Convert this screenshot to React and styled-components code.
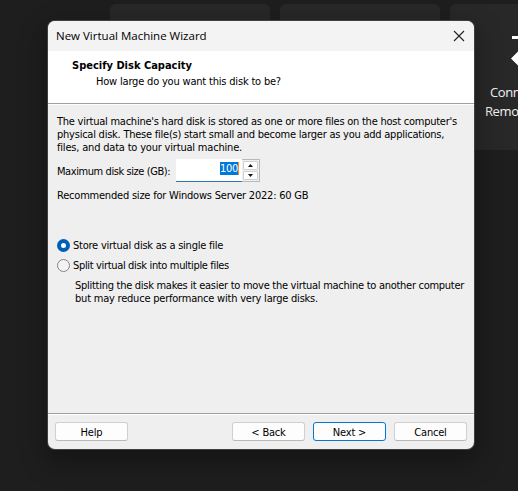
import React, { useState } from "react";
import styled, { createGlobalStyle, css } from "styled-components";

const GlobalStyle = createGlobalStyle`
  *, *::before, *::after { box-sizing: border-box; }
  html, body { margin: 0; background: #1e1e1e; }
  button, input { font: inherit; color: inherit; letter-spacing: inherit; margin: 0; }
`;

const Desktop = styled.main`
  position: relative;
  width: 518px;
  height: 491px;
  overflow: hidden;
  background: #1e1e1e;
`;

const TileRow = styled.div`
  display: flex;
  gap: 10px;
  padding: 4px 0 0 110px;
`;

const Tile = styled.div`
  flex: 0 0 160px;
  height: 146px;
  border-radius: 6px;
  background: #282828;
  color: #f3f3f3;
  font: 13px/19px "Open Sans", "Noto Sans", sans-serif;
`;

const TileContent = styled.div`
  padding: 31px 0 0 34px;
  svg { display: block; margin-left: 26px; }
`;

const TileLabel = styled.div`
  margin-top: 17px;
  padding-left: 6px;
  white-space: nowrap;
  letter-spacing: -0.4px;
`;

const TileLabelSecond = styled(TileLabel)`
  margin-top: 0;
  padding-left: 1px;
`;

const Dialog = styled.section`
  position: absolute;
  left: 48px;
  top: 21px;
  width: 426px;
  height: 428px;
  display: flex;
  flex-direction: column;
  overflow: hidden;
  border-radius: 7px;
  background: #efefef;
  color: #000;
  font: 11px/13px "DejaVu Sans Condensed", "DejaVu Sans", sans-serif;
  box-shadow: 0 0 0 1px #404040, 0 10px 26px 4px rgba(0, 0, 0, 0.3);
`;

const TitleBar = styled.header`
  flex: 0 0 30px;
  display: flex;
  align-items: center;
  justify-content: space-between;
  padding: 0 9px 0 8px;
  background: #f3f3f3;
  font: 11.5px/16px "Open Sans", "Noto Sans", sans-serif;
`;

const CloseButton = styled.button`
  width: 12px;
  height: 12px;
  padding: 0;
  border: 0;
  background: none;
  svg { display: block; }
`;

const Heading = styled.div`
  flex: 0 0 53px;
  padding: 8px 0 0 24px;
  background: #fff;
  border-bottom: 1px solid #a0a0a0;
  box-shadow: 0 1px #fff;
`;

const Text = styled.div`
  white-space: nowrap;
  letter-spacing: ${(p) => p.$tracking || 0}px;
`;

const HeadingTitle = styled(Text)`
  font-weight: bold;
`;

const HeadingSubtitle = styled(Text)`
  padding-left: 24px;
  margin-top: 3px;
`;

const Body = styled.div`
  flex: 1;
  padding: 11px 8px 0 9px;
`;

const Field = styled.div`
  display: flex;
  align-items: center;
  height: 24px;
  margin-top: 5px;
`;

const FieldLabel = styled(Text)`
  width: 119px;
`;

const Spinner = styled.div`
  display: flex;
  width: 84px;
  height: 23px;
  margin-bottom: 2px;
  border: 1px solid #b6bac0;
  border-left: 0;
`;

const SizeValue = styled.div`
  width: 66px;
  margin: -1px 0;
  padding: 3px 3px 0 0;
  display: flex;
  justify-content: flex-end;
  background: #fff;
  border-bottom: 1px solid #2f77b8;
  span {
    height: 13px;
    background: #0078d7;
    color: #fff;
    border-right: 1px solid #ff8728;
    letter-spacing: -0.3px;
  }
`;

const Steppers = styled.div`
  flex: 1;
  display: grid;
  grid-template-rows: 1fr 1fr;
  gap: 1px;
  padding: 1px;
`;

const Stepper = styled.button`
  display: grid;
  place-items: center;
  min-height: 0;
  padding: 0;
  border: 1px solid #d0d0d0;
  border-radius: 1px;
  background: #fdfdfd;
`;

const Recommended = styled(Text)`
  margin-top: 6px;
`;

const Options = styled.div`
  margin-top: 33px;
  display: flex;
  flex-direction: column;
`;

const Option = styled.label`
  display: flex;
  align-items: center;
  gap: 3px;
  height: 20px;
`;

const Radio = styled.input`
  appearance: none;
  flex: none;
  width: 13px;
  height: 13px;
  border: 1px solid #858585;
  border-radius: 50%;
  background: #f3f3f3;
  &:checked {
    border: 4px solid #005fb8;
    background: #fff;
  }
`;

const OptionNote = styled.div`
  padding: 4px 0 0 18px;
`;

const Footer = styled.footer`
  flex: 0 0 35px;
  display: flex;
  gap: 8px;
  padding: 8px 7px;
  border-top: 1px solid #a0a0a0;
  box-shadow: inset 0 1px #fff;
`;

const Button = styled.button`
  width: 73px;
  height: 19px;
  padding: 2px 0 0;
  border: 1px solid #d0d0d0;
  border-bottom-color: #b9b9b9;
  border-radius: 3px;
  background: #fdfdfd;
  letter-spacing: -0.2px;
  ${(p) => p.$primary && css`border-color: #0078d4;`}
  ${(p) => p.$first && css`margin-right: auto;`}
`;

function Arrow({ down }) {
  return (
    <svg width="5" height="3" viewBox="0 0 5 3">
      <path d={down ? "M0 0h5L2.5 3z" : "M0 3h5L2.5 0z"} fill="#111" />
    </svg>
  );
}

export default function App() {
  const [mode, setMode] = useState("single");
  return (
    <Desktop>
      <GlobalStyle />
      <TileRow>
        <Tile />
        <Tile />
        <Tile>
          <TileContent>
            <svg width="34" height="31" viewBox="0 0 34 31" fill="#fff">
              <path d="M2 1h22v-1l9 2.5-9 6v-4.500H2z" />
              <path d="M1 23.500L9 15.500v6.500h23v3H9v6.500z" />
            </svg>
            <TileLabel>Conn</TileLabel>
            <TileLabelSecond>Remo</TileLabelSecond>
          </TileContent>
        </Tile>
      </TileRow>

      <Dialog>
        <TitleBar>
          <span>New Virtual Machine Wizard</span>
          <CloseButton aria-label="Close">
            <svg width="12" height="12" viewBox="0 0 12 12" stroke="#222" strokeWidth="1.1">
              <path d="M1 1l10 10M11 1L1 11" />
            </svg>
          </CloseButton>
        </TitleBar>
        <Heading>
          <HeadingTitle>Specify Disk Capacity</HeadingTitle>
          <HeadingSubtitle $tracking={-0.19}>How large do you want this disk to be?</HeadingSubtitle>
        </Heading>
        <Body>
          <Text $tracking={-0.24}>The virtual machine's hard disk is stored as one or more files on the host computer's</Text>
          <Text $tracking={-0.235}>physical disk. These file(s) start small and become larger as you add applications,</Text>
          <Text $tracking={-0.19}>files, and data to your virtual machine.</Text>
          <Field>
            <FieldLabel $tracking={-0.42}>Maximum disk size (GB):</FieldLabel>
            <Spinner>
              <SizeValue><span>100</span></SizeValue>
              <Steppers>
                <Stepper aria-label="Increase"><Arrow /></Stepper>
                <Stepper aria-label="Decrease"><Arrow down /></Stepper>
              </Steppers>
            </Spinner>
          </Field>
          <Recommended $tracking={-0.21}>Recommended size for Windows Server 2022: 60 GB</Recommended>
          <Options>
            <Option>
              <Radio type="radio" name="mode" checked={mode === "single"} onChange={() => setMode("single")} />
              <Text $tracking={-0.23}>Store virtual disk as a single file</Text>
            </Option>
            <Option>
              <Radio type="radio" name="mode" checked={mode === "split"} onChange={() => setMode("split")} />
              <Text $tracking={-0.34}>Split virtual disk into multiple files</Text>
            </Option>
            <OptionNote>
              <Text $tracking={-0.275}>Splitting the disk makes it easier to move the virtual machine to another computer</Text>
              <Text $tracking={-0.215}>but may reduce performance with very large disks.</Text>
            </OptionNote>
          </Options>
        </Body>
        <Footer>
          <Button $first>Help</Button>
          <Button>&lt; Back</Button>
          <Button $primary>Next &gt;</Button>
          <Button>Cancel</Button>
        </Footer>
      </Dialog>
    </Desktop>
  );
}
